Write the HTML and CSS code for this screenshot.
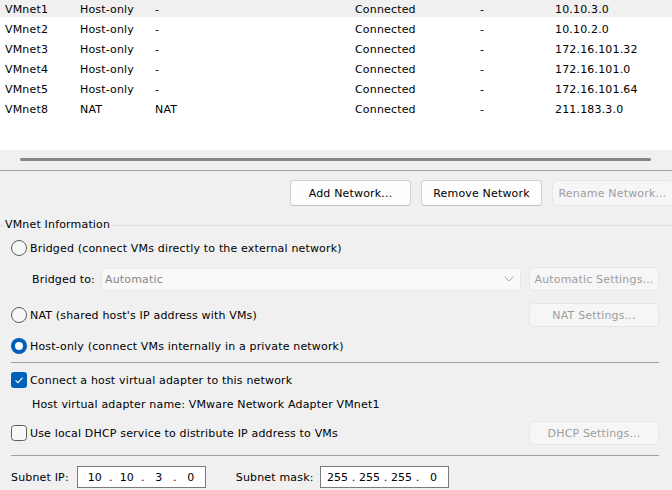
FILE: index.html
```html
<!DOCTYPE html>
<html>
<head>
<meta charset="utf-8">
<link rel="stylesheet" href="styles.css">
</head>
<body>
<div class="list">
  <div class="row selected"><span>VMnet1</span><span>Host-only</span><span>-</span><span>Connected</span><span>-</span><span>10.10.3.0</span></div>
  <div class="row"><span>VMnet2</span><span>Host-only</span><span>-</span><span>Connected</span><span>-</span><span>10.10.2.0</span></div>
  <div class="row"><span>VMnet3</span><span>Host-only</span><span>-</span><span>Connected</span><span>-</span><span>172.16.101.32</span></div>
  <div class="row"><span>VMnet4</span><span>Host-only</span><span>-</span><span>Connected</span><span>-</span><span>172.16.101.0</span></div>
  <div class="row"><span>VMnet5</span><span>Host-only</span><span>-</span><span>Connected</span><span>-</span><span>172.16.101.64</span></div>
  <div class="row"><span>VMnet8</span><span>NAT</span><span>NAT</span><span>Connected</span><span>-</span><span>211.183.3.0</span></div>
</div>
<div class="hscroll"><div class="thumb"></div></div>
<div class="actions">
  <button class="btn">Add Network...</button>
  <button class="btn">Remove Network</button>
  <button class="btn disabled">Rename Network...</button>
</div>
<div class="legend"><span class="lline short"></span><span class="ltext">VMnet Information</span><span class="lline"></span></div>
<div class="opts">
  <div class="opt r-bridged">
    <svg class="radio" width="16" height="16" viewBox="0 0 16 16"><circle cx="8" cy="8" r="7.5" fill="#f8f8f8" stroke="#5c5c5c"/></svg>
    <span>Bridged (connect VMs directly to the external network)</span>
  </div>
  <div class="opt r-bridgeto">
    <span class="sublabel">Bridged to:</span>
    <div class="select"><span>Automatic</span>
      <svg width="10" height="6" viewBox="0 0 10 6"><polyline points="0.5,0.5 5,5 9.5,0.5" fill="none" stroke="#a8a8a8" stroke-width="1"/></svg>
    </div>
    <button class="btn disabled side">Automatic Settings...</button>
  </div>
  <div class="opt r-nat">
    <svg class="radio" width="16" height="16" viewBox="0 0 16 16"><circle cx="8" cy="8" r="7.5" fill="#f8f8f8" stroke="#5c5c5c"/></svg>
    <span>NAT (shared host's IP address with VMs)</span>
    <button class="btn disabled side">NAT Settings...</button>
  </div>
  <div class="opt r-host">
    <svg class="radio" width="16" height="16" viewBox="0 0 16 16"><circle cx="8" cy="8" r="8" fill="#005fb8"/><circle cx="8" cy="8" r="4" fill="#ffffff"/></svg>
    <span>Host-only (connect VMs internally in a private network)</span>
  </div>
  <div class="sep sep1"></div>
  <div class="opt r-connect">
    <svg class="radio" width="16" height="16" viewBox="0 0 16 16"><rect x="0" y="0" width="16" height="16" rx="3" fill="#005fb8"/><polyline points="4.5,8.3 7,10.6 11.5,5.6" fill="none" stroke="#ffffff" stroke-width="1.1"/></svg>
    <span>Connect a host virtual adapter to this network</span>
  </div>
  <div class="opt r-adapter">
    <span class="sublabel">Host virtual adapter name: VMware Network Adapter VMnet1</span>
  </div>
  <div class="opt r-dhcp">
    <svg class="radio" width="16" height="16" viewBox="0 0 16 16"><rect x="0.5" y="0.5" width="15" height="15" rx="3" fill="#f8f8f8" stroke="#5c5c5c"/></svg>
    <span>Use local DHCP service to distribute IP address to VMs</span>
    <button class="btn disabled side">DHCP Settings...</button>
  </div>
  <div class="sep sep2"></div>
  <div class="opt r-subnet">
    <span>Subnet IP:</span>
    <div class="ip ip1"><span class="oct">10</span><span class="dot">.</span><span class="oct">10</span><span class="dot">.</span><span class="oct">3</span><span class="dot">.</span><span class="oct">0</span></div>
    <span class="masklabel">Subnet mask:</span>
    <div class="ip ip2"><span class="oct">255</span><span class="dot">.</span><span class="oct">255</span><span class="dot">.</span><span class="oct">255</span><span class="dot">.</span><span class="oct">0</span></div>
  </div>
</div>
</body>
</html>
```
FILE: styles.css
```css
html, body {
  margin: 0;
  padding: 0;
}
body {
  width: 672px;
  height: 490px;
  overflow: hidden;
  background: #f0f0f0;
  font-family: "DejaVu Sans", sans-serif;
  font-size: 11px;
  letter-spacing: 0.17px;
  color: #000;
}
.list {
  height: 150px;
  background: #fff;
  overflow: hidden;
}
.row {
  display: grid;
  grid-template-columns: 75px 75px 200px 125px 75px 1fr;
  padding-left: 5px;
  height: 20px;
  line-height: 20px;
  white-space: nowrap;
}
.row.selected {
  background: linear-gradient(#f0f0f0 0 17px, #fff 17px);
}
.hscroll {
  height: 21px;
  padding: 8px 21px 0 20px;
  box-sizing: border-box;
  border-bottom: 1px solid #a0a0a0;
}
.thumb {
  height: 3px;
  border-radius: 2px;
  background: #858585;
}
.actions {
  display: flex;
  justify-content: flex-end;
  gap: 10px;
  margin-top: 9px;
  margin-right: -1px;
}
.btn {
  font-family: "DejaVu Sans", sans-serif;
  font-size: 11px;
  letter-spacing: 0.17px;
  color: #000;
  height: 26px;
  width: 121px;
  padding: 1px 0 0;
  background: #fdfdfd;
  border: 1px solid #d2d2d2;
  border-bottom-color: #c0c0c0;
  border-radius: 4px;
  white-space: nowrap;
  flex: none;
}
.btn.disabled {
  background: #f6f6f6;
  border-color: #e6e6e6;
  color: #9d9d9d;
}
.legend {
  display: flex;
  align-items: center;
  margin-top: 12px;
  height: 14px;
  line-height: 14px;
}
.lline {
  flex: 1;
  height: 1px;
  background: #dcdcdc;
}
.lline.short {
  flex: none;
  width: 4px;
}
.ltext {
  padding: 0 2px 0 1px;
}
.opts {
  padding: 0 13px 0 11px;
}
.opt {
  display: flex;
  align-items: center;
  height: 24px;
  white-space: nowrap;
}
.radio {
  flex: none;
  margin-right: 3px;
}
.sublabel {
  padding-left: 21px;
}
.side {
  margin-left: auto;
  width: 130px;
  height: 24px;
}
.r-bridged { margin-top: 4px; }
.r-bridgeto { margin-top: 7px; }
.select {
  margin-left: 6px;
  width: 420px;
  height: 23px;
  box-sizing: border-box;
  background: #f9f9f9;
  border: 1px solid #e8e8e8;
  border-radius: 3px;
  display: flex;
  align-items: center;
  justify-content: space-between;
  padding: 0 6px 0 3px;
  color: #858585;
}
.r-nat { margin-top: 12px; }
.r-host { margin-top: 7px; }
.sep {
  height: 1px;
  background: #a0a0a0;
}
.sep1 { margin-top: 4px; }
.r-connect { margin-top: 5px; }
.r-dhcp { margin-top: 5px; }
.sep2 { margin-top: 10px; }
.r-subnet {
  margin-top: 10px;
  height: 22px;
}
.ip {
  display: flex;
  align-items: center;
  height: 22px;
  box-sizing: border-box;
  width: 129px;
  padding-left: 5px;
  background: #fff;
  border: 1px solid #7a7a7a;
  letter-spacing: 0;
}
.ip1 { margin-left: 8px; }
.masklabel { margin-left: 30px; }
.ip2 { margin-left: 6px; }
.oct {
  width: 24px;
  text-align: center;
}
.dot {
  width: 8px;
  text-align: center;
}
```
